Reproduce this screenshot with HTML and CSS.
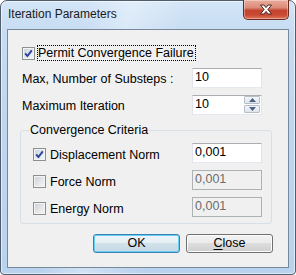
FILE: index.html
```html
<!DOCTYPE html>
<html>
<head>
<meta charset="utf-8">
<link rel="stylesheet" href="styles.css">
</head>
<body>
<div class="window">
  <div class="titlebar">
    <span class="title">Iteration Parameters</span>
    <div class="close-btn">
      <svg width="14" height="11" viewBox="0 0 14 11"><path d="M1.5 1 H5 L7 3.6 L9 1 H12.5 L8.9 5.5 L12.5 10 H9 L7 7.4 L5 10 H1.5 L5.1 5.5 Z" fill="#fff" stroke="#4a2a24" stroke-width="1" stroke-linejoin="round"/></svg>
    </div>
  </div>
  <div class="client">
    <div class="row-check">
      <span class="cb checked"><svg width="11" height="11" viewBox="0 0 11 11"><path d="M2.2 5.4 L4.4 8 L8.8 2.4" fill="none" stroke="#2c3f9a" stroke-width="1.9"/></svg></span>
      <span class="focus-label">Permit Convergence Failure</span>
    </div>
    <div class="field-row">
      <span class="label">Max, Number of Substeps :</span>
      <div class="textbox">10</div>
    </div>
    <div class="field-row">
      <span class="label">Maximum Iteration</span>
      <div class="textbox spin">
        <span class="spin-val">10</span>
        <div class="spin-btns">
          <div class="spin-b"><svg width="7" height="4" viewBox="0 0 7 4"><path d="M0 4 L3.5 0 L7 4 Z" fill="#4d6185"/></svg></div>
          <div class="spin-b"><svg width="7" height="4" viewBox="0 0 7 4"><path d="M0 0 L3.5 4 L7 0 Z" fill="#4d6185"/></svg></div>
        </div>
      </div>
    </div>
    <fieldset class="group">
      <legend>Convergence Criteria</legend>
      <div class="group-row">
        <span class="check-label"><span class="cb checked"><svg width="11" height="11" viewBox="0 0 11 11"><path d="M2.2 5.4 L4.4 8 L8.8 2.4" fill="none" stroke="#2c3f9a" stroke-width="1.9"/></svg></span><span class="lbl">Displacement Norm</span></span>
        <div class="textbox">0,001</div>
      </div>
      <div class="group-row">
        <span class="check-label"><span class="cb"></span><span class="lbl">Force Norm</span></span>
        <div class="textbox disabled">0,001</div>
      </div>
      <div class="group-row">
        <span class="check-label"><span class="cb"></span><span class="lbl">Energy Norm</span></span>
        <div class="textbox disabled">0,001</div>
      </div>
    </fieldset>
    <div class="buttons">
      <div class="btn default">OK</div>
      <div class="btn"><u>C</u>lose</div>
    </div>
  </div>
</div>
</body>
</html>
```

FILE: styles.css
```css
* { box-sizing: border-box; }
html, body { margin: 0; padding: 0; background: #fff; }
body { width: 296px; height: 275px; overflow: hidden; }

.window {
  width: 296px;
  height: 275px;
  border: 1px solid #4f5d6c;
  border-radius: 7px 7px 4px 4px;
  padding: 0 6px 6px 6px;
  display: flex;
  flex-direction: column;
  background:
    linear-gradient(100deg, rgba(255,255,255,0) 25%, rgba(255,255,255,0.35) 38%, rgba(255,255,255,0) 55%),
    linear-gradient(to bottom, #d3e5f7 0px, #c8ddf3 28px, #bfd6ef 120px, #b9d2ee 100%);
  box-shadow: inset 0 0 0 1px rgba(255,255,255,0.55);
}

.titlebar {
  height: 28px;
  display: flex;
  justify-content: space-between;
  align-items: flex-start;
}
.title {
  font-family: "Liberation Sans", Arial, sans-serif;
  font-size: 12px;
  line-height: 15px;
  color: #1b1b1b;
  margin: 6px 0 0 1px;
}
.close-btn {
  width: 46px;
  height: 20px;
  margin-top: -1px;
  border: 1px solid #6b2a20;
  border-top: none;
  border-radius: 0 0 5px 5px;
  background: linear-gradient(to bottom, #e9ab9c 0%, #dc8c79 40%, #c5442f 55%, #c94a33 80%, #e07a5c 100%);
  box-shadow: inset 0 0 0 1px rgba(255,255,255,0.35);
  display: flex;
  align-items: center;
  justify-content: center;
}

.client {
  width: 282px;
  height: 239px;
  border: 1px solid #76889a;
  background: #f0f0f0;
  padding: 15px 16px 0 12px;
  display: flex;
  flex-direction: column;
  font-family: "Liberation Sans", Arial, sans-serif;
  font-size: 12.5px;
  color: #000;
}

.row-check {
  height: 16px;
  padding-left: 2px;
  display: flex;
  align-items: center;
}
.focus-label {
  margin-left: 2px;
  height: 16px;
  line-height: 14px;
  border: 1px dotted #000;
  padding: 0 1px 0 0;
}

.cb {
  width: 13px;
  height: 13px;
  flex: none;
  border: 1px solid #8e8f8f;
  background: linear-gradient(135deg, #c9ced4 0%, #e4e6e9 55%, #f7f7f7 100%);
  box-shadow: inset 0 0 0 1px #f4f4f4;
  display: flex;
  align-items: center;
  justify-content: center;
}
.cb.checked {
  background: linear-gradient(135deg, #c6d0dc 0%, #e2e8ef 55%, #f6f8fa 100%);
}
.cb svg { display: block; }

.field-row {
  margin-top: 7px;
  height: 20px;
  padding: 0 10px 0 2px;
  display: flex;
  align-items: center;
  justify-content: space-between;
}
.label { padding-top: 1px; }

.textbox {
  width: 70px;
  height: 20px;
  flex: none;
  background: #fff;
  border: 1px solid #e2e3ea;
  border-top-color: #abadb3;
  border-bottom-color: #e3e9ef;
  padding: 1px 2px;
  line-height: 15px;
}
.textbox.disabled {
  background: #f0f0f0;
  border: 1px solid #adb2b5;
  color: #6d6d6d;
}
.textbox.spin {
  display: flex;
  justify-content: space-between;
  padding: 0 1px 0 2px;
}
.spin-val { padding-top: 1px; }
.spin-btns {
  width: 16px;
  display: flex;
  flex-direction: column;
  gap: 1px;
  padding-top: 0;
}
.spin-b {
  height: 8px;
  border: 1px solid #b6bfc9;
  border-radius: 1px;
  background: linear-gradient(to bottom, #f6f8fa, #dde3ea);
  display: flex;
  align-items: center;
  justify-content: center;
}
.spin-b svg { display: block; }

.group {
  margin: 8px 0 0 0;
  border: 1px solid #d5dfe5;
  border-radius: 3px;
  padding: 5px 9px 6px 12px;
  min-width: 0;
  display: flex;
  flex-direction: column;
  gap: 7px;
}
.group legend {
  padding: 0 1px;
  margin-left: -4px;
  line-height: 15px;
}
.group-row {
  height: 20px;
  display: flex;
  align-items: center;
  justify-content: space-between;
}
.check-label {
  display: flex;
  align-items: center;
  padding-top: 3px;
}
.check-label .lbl { margin-left: 4px; }

.buttons {
  margin-top: 10px;
  margin-right: -1px;
  display: flex;
  justify-content: flex-end;
  gap: 6px;
}
.btn {
  width: 87px;
  height: 19px;
  border: 1px solid #707070;
  border-radius: 3px;
  background: linear-gradient(to bottom, #f2f2f2 0%, #ebebeb 50%, #dddddd 50%, #cfcfcf 100%);
  box-shadow: inset 0 0 0 1px #fcfcfc;
  text-align: center;
  line-height: 16px;
  font-size: 12.5px;
}
.btn.default {
  border-color: #3c7fb1;
  background: linear-gradient(to bottom, #eef5f9 0%, #e3eef4 50%, #d2e2eb 50%, #c4d8e4 100%);
  box-shadow: inset 0 0 0 1px #67d0f4;
}
.btn u { text-decoration: underline; text-underline-offset: 2px; }
```
